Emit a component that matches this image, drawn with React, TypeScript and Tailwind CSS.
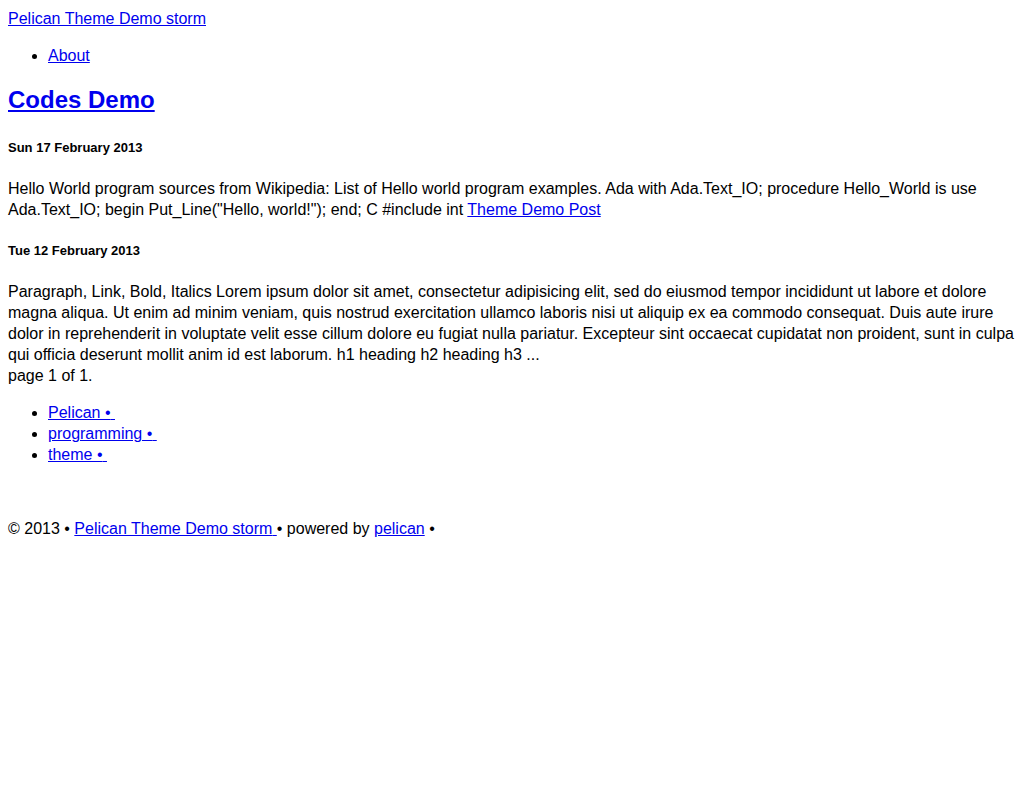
export default function App() {
  const link = "text-[#0000ee] underline";
  return (
    <div
      className="bg-white min-h-[800px] px-2 text-black text-[16px] leading-[21px]"
      style={{ fontFamily: '"Liberation Sans", Arial, sans-serif' }}
    >
      <div className="pt-2">
        <a href="#" className={link}>Pelican Theme Demo storm</a>
      </div>
      <ul className="mt-4 list-disc pl-10">
        <li>
          <a href="#" className={link}>About</a>
        </li>
      </ul>
      <h2 className="mt-[19px] text-[24px] leading-[30px] font-bold">
        <a href="#" className={link}>Codes Demo</a>
      </h2>
      <h5 className="mt-[24px] text-[13px] leading-[17px] font-bold">Sun 17 February 2013</h5>
      <div className="mt-[22px]">
        Hello World program sources from Wikipedia: List of Hello world program examples. Ada with Ada.Text_IO; procedure Hello_World is use Ada.Text_IO; begin Put_Line("Hello, world!"); end; C #include int{" "}
        <a href="#" className={link}>Theme Demo Post</a>
      </div>
      <h5 className="mt-[22px] text-[13px] leading-[17px] font-bold">Tue 12 February 2013</h5>
      <div className="mt-[22px]">
        Paragraph, Link, Bold, Italics Lorem ipsum dolor sit amet, consectetur adipisicing elit, sed do eiusmod tempor incididunt ut labore et dolore magna aliqua. Ut enim ad minim veniam, quis nostrud exercitation ullamco laboris nisi ut aliquip ex ea commodo consequat. Duis aute irure dolor in reprehenderit in voluptate velit esse cillum dolore eu fugiat nulla pariatur. Excepteur sint occaecat cupidatat non proident, sunt in culpa qui officia deserunt mollit anim id est laborum. h1 heading h2 heading h3 ...
      </div>
      <div>page 1 of 1.</div>
      <ul className="mt-4 list-disc pl-10">
        <li><a href="#" className={link}>Pelican •{"\u00a0"}</a></li>
        <li><a href="#" className={link}>programming •{"\u00a0"}</a></li>
        <li><a href="#" className={link}>theme •{"\u00a0"}</a></li>
      </ul>
      <div className="mt-[53px]">
        © 2013 • <a href="#" className={link}>Pelican Theme Demo storm{"\u00a0"}</a>• powered by{" "}
        <a href="#" className={link}>pelican</a> •
      </div>
    </div>
  );
}
